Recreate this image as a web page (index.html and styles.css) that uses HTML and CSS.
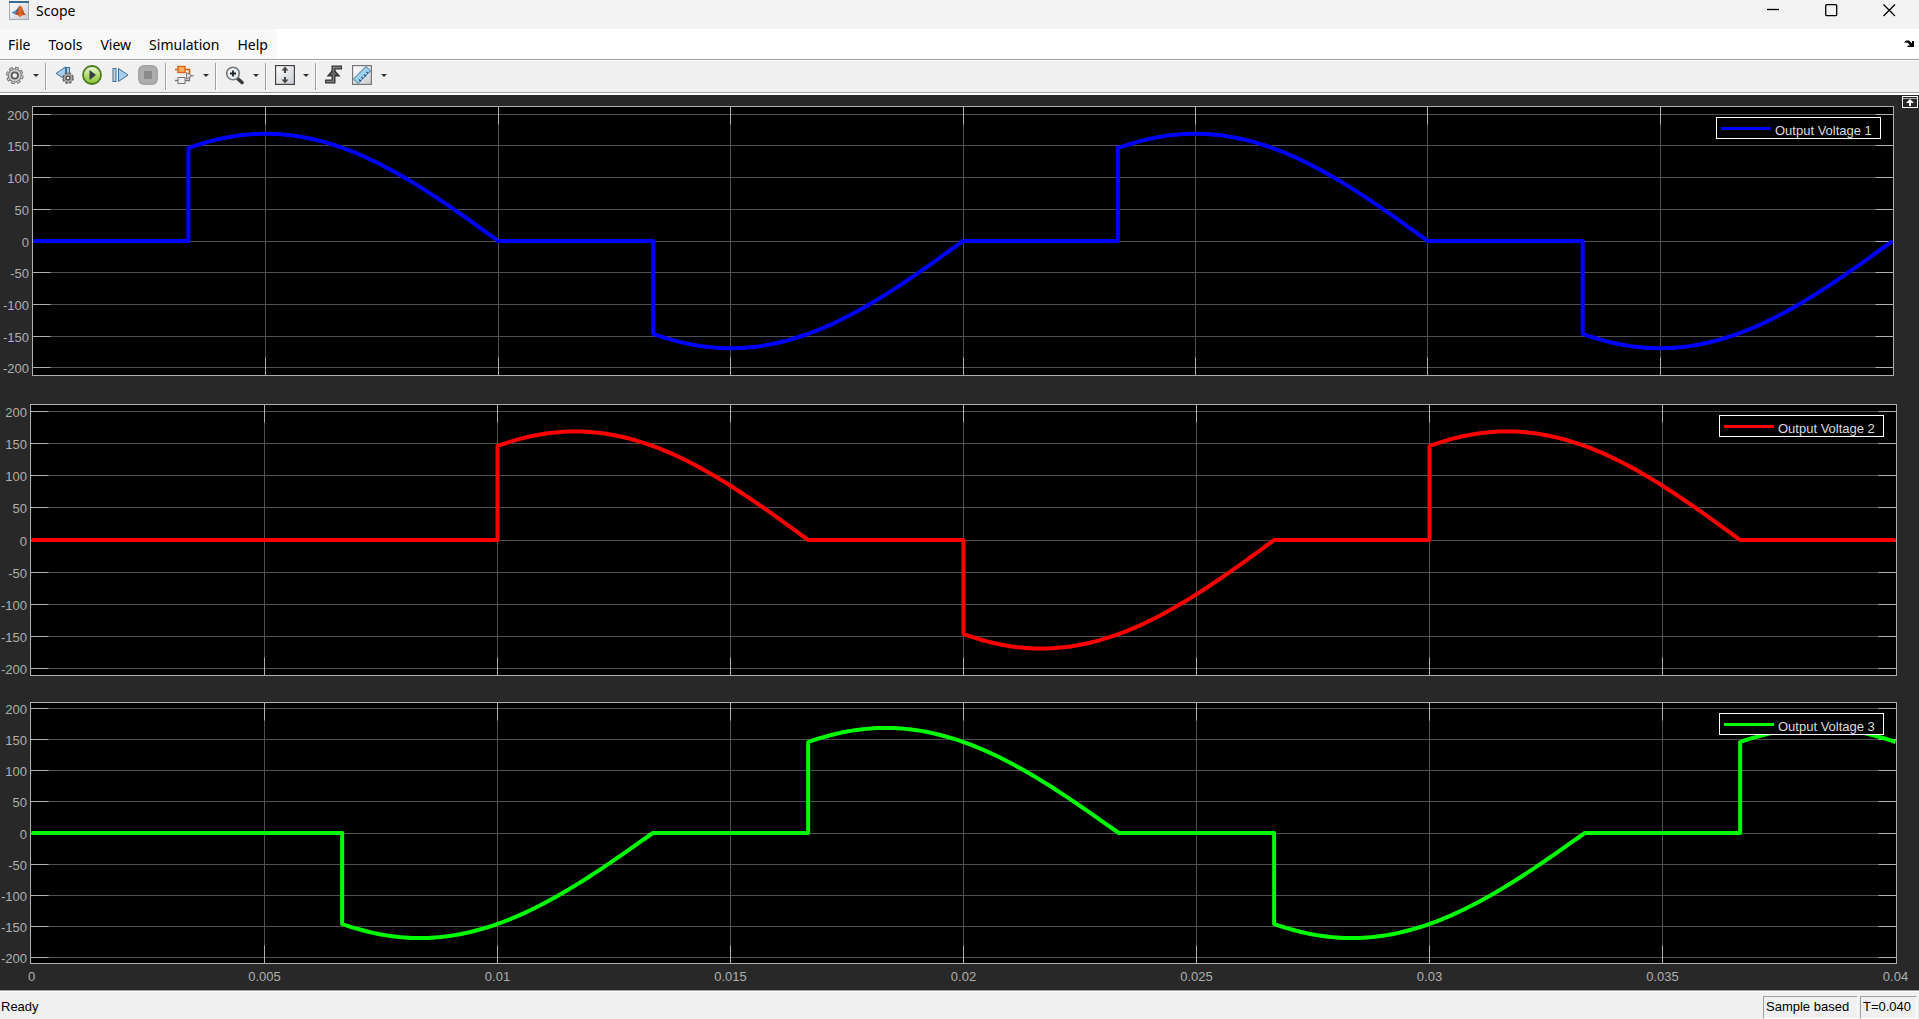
FILE: index.html
```html
<!DOCTYPE html>
<html lang="en">
<head>
<meta charset="utf-8">
<title>Scope</title>
<link rel="stylesheet" href="styles.css">
</head>
<body>
<div class="window">
  <header class="titlebar">
    <svg class="app-icon" width="20" height="20" viewBox="0 0 20 20" aria-hidden="true">
      <defs>
        <linearGradient id="peak" x1="0" y1="0" x2="1" y2="0">
          <stop offset="0" stop-color="#7a1c10"/><stop offset=".45" stop-color="#e8702a"/><stop offset="1" stop-color="#b32c14"/>
        </linearGradient>
        <linearGradient id="paper" x1="0" y1="0" x2="1" y2="1">
          <stop offset="0" stop-color="#ffffff"/><stop offset="1" stop-color="#c8cdd3"/>
        </linearGradient>
      </defs>
      <rect x=".5" y=".5" width="19" height="18" fill="url(#paper)" stroke="#a3a9b0"/>
      <rect x="0" y="0" width="20" height="2" fill="#3f6a94"/>
      <path d="M2.5 11.5 L6.5 9.5 L8.5 12 L6 13.5 Z" fill="#4d8fc4"/>
      <path d="M6.5 9.5 C8.5 9 9.5 5 11 4.5 L8.5 12 Z" fill="#2f5f96"/>
      <path d="M6 13.5 C8.500 12 9.500 5 11.500 4.500 C13.500 5 14.500 12 17 14.500 C14.500 13.500 13 14 11 16.500 C10 14.500 8.500 13 6 13.500 Z" fill="url(#peak)"/>
    </svg>
    <h1 class="title">Scope</h1>
    <div class="window-controls">
      <button class="window-button" type="button" aria-label="Minimize"><svg width="13" height="13" viewBox="0 0 13 13"><path d="M0 5.500H12" /></svg></button>
      <button class="window-button" type="button" aria-label="Maximize"><svg width="13" height="13" viewBox="0 0 13 13"><rect x=".7" y=".7" width="11" height="11" rx="1"/></svg></button>
      <button class="window-button" type="button" aria-label="Close"><svg width="13" height="13" viewBox="0 0 13 13"><path d="M.5 .5 L12 12 M12 .5 L.5 12"/></svg></button>
    </div>
  </header>

  <div class="menubar">
    <nav class="menus" aria-label="Menu">
      <button class="menu" type="button">File</button>
      <button class="menu" type="button">Tools</button>
      <button class="menu" type="button">View</button>
      <button class="menu" type="button">Simulation</button>
      <button class="menu" type="button">Help</button>
    </nav>
    <button class="dock" type="button" aria-label="Dock window">
      <svg width="11" height="8" viewBox="0 0 11 8"><path d="M0 2.500 L2 .5 H5 L8 3.500 V1 H10 V7 H3.500 V5.500 H6 L4 2.800 Z" fill="#000"/></svg>
    </button>
  </div>

  <div class="toolbar" role="toolbar" aria-label="Scope tools">
    <div class="group group-first">
      <button class="tool" type="button" aria-label="Configuration properties">
        <svg width="20" height="20" viewBox="0 0 20 20">
          <circle cx="10.800" cy="10.500" r="7.400" fill="none" stroke="#6a6a6a" stroke-width="2.800" stroke-dasharray="3.600 2.210"/>
          <circle cx="10.800" cy="10.500" r="6.600" fill="#cdcdcd" stroke="#7a7a7a" stroke-width="1.200"/>
          <circle cx="10.800" cy="10.500" r="7.300" fill="none" stroke="#c6c6c6" stroke-width="1.400" stroke-dasharray="2.200 3.530" stroke-dashoffset="-.7"/>
          <circle cx="10.800" cy="10.500" r="3.200" fill="#f2f2f2" stroke="#5a5a5a" stroke-width="1.800"/>
        </svg>
      </button>
      <button class="drop" type="button" aria-label="More configuration"><svg width="6" height="3" viewBox="0 0 6 3"><path d="M0 0H6L3 3Z"/></svg></button>
    </div>
    <div class="group group-run">
      <button class="tool" type="button" aria-label="Step back">
        <svg width="20" height="20" viewBox="0 0 20 20">
          <path d="M2 8.500 L11.500 2 V14.500 Z" fill="#a9cde6" stroke="#3d6f99"/>
          <rect x="12.500" y="2.500" width="3" height="8" fill="#a9cde6" stroke="#3d6f99"/>
          <circle cx="14" cy="13" r="4.800" fill="none" stroke="#666" stroke-width="2.200" stroke-dasharray="2.500 1.270"/>
          <circle cx="14" cy="13" r="4.200" fill="#ccc" stroke="#777"/>
          <circle cx="14" cy="13" r="2" fill="#eee" stroke="#4c4c4c" stroke-width="1.500"/>
        </svg>
      </button>
      <button class="tool" type="button" aria-label="Run">
        <svg width="20" height="20" viewBox="0 0 20 20">
          <defs><linearGradient id="run" x1="0" y1="0" x2="0" y2="1"><stop offset="0" stop-color="#f2f9dd"/><stop offset=".5" stop-color="#b6dc78"/><stop offset="1" stop-color="#84c52f"/></linearGradient></defs>
          <circle cx="10" cy="10" r="9" fill="url(#run)" stroke="#4a7a1c" stroke-width="1.800"/>
          <path d="M7.500 5 L14 10 L7.500 15 Z" fill="#363d44"/>
        </svg>
      </button>
      <button class="tool" type="button" aria-label="Step forward">
        <svg width="20" height="20" viewBox="0 0 20 20">
          <rect x="3" y="3.500" width="3" height="13" fill="#b5d6ec" stroke="#3f6d96"/>
          <path d="M8.500 3.500 L18 10 L8.500 16.500 Z" fill="#a6cdea" stroke="#3f6d96"/>
        </svg>
      </button>
      <button class="tool" type="button" aria-label="Stop">
        <svg width="20" height="20" viewBox="0 0 20 20">
          <rect x="0" y="0" width="20" height="20" rx="6" fill="#a3a3a3"/>
          <rect x="1.500" y="1.500" width="17" height="17" rx="5" fill="#adadad"/>
          <rect x="6" y="6" width="8" height="8" fill="#8a8a8a"/>
        </svg>
      </button>
    </div>
    <div class="group">
      <button class="tool" type="button" aria-label="Highlight signal block">
        <svg width="20" height="20" viewBox="0 0 20 20">
          <path d="M1 4.500H15.500V9" fill="none" stroke="#c65a1a" stroke-width="1.600"/>
          <rect x="4" y="1.500" width="7" height="6" fill="#f9b163" stroke="#d9641c" stroke-width="1.400"/>
          <path d="M1 15.500H15.500V12" fill="none" stroke="#777" stroke-width="1.400"/>
          <rect x="4" y="12.500" width="7" height="6" fill="#eee" stroke="#777"/>
          <path d="M12.500 7.500 V14 L18 10.800 Z" fill="#ddd" stroke="#777"/>
          <path d="M18 10.800H20" stroke="#777"/>
        </svg>
      </button>
      <button class="drop" type="button" aria-label="More highlight options"><svg width="6" height="3" viewBox="0 0 6 3"><path d="M0 0H6L3 3Z"/></svg></button>
    </div>
    <div class="group">
      <button class="tool" type="button" aria-label="Zoom">
        <svg width="20" height="20" viewBox="0 0 20 20">
          <path d="M13 13 L18 17.500" stroke="#3b3b3b" stroke-width="3.600" stroke-linecap="round"/>
          <circle cx="9" cy="8.500" r="6.300" fill="#eaf1f6" stroke="#777" stroke-width="1.600"/>
          <path d="M9 5.500V11.500M6 8.500H12" stroke="#222" stroke-width="1.800"/>
        </svg>
      </button>
      <button class="drop" type="button" aria-label="More zoom options"><svg width="6" height="3" viewBox="0 0 6 3"><path d="M0 0H6L3 3Z"/></svg></button>
    </div>
    <div class="group group-wide">
      <button class="tool" type="button" aria-label="Scale axes limits">
        <svg width="20" height="20" viewBox="0 0 20 20">
          <rect x=".6" y=".6" width="18.800" height="18.800" fill="url(#paper)" stroke="#444" stroke-width="1.200"/>
          <path d="M10 1.500 L13.500 5.500 H11 V8 H9 V5.500 H6.500 Z M10 18.500 L13.500 14.500 H11 V12 H9 V14.500 H6.500 Z" fill="#444"/>
        </svg>
      </button>
      <button class="drop" type="button" aria-label="More scaling options"><svg width="6" height="3" viewBox="0 0 6 3"><path d="M0 0H6L3 3Z"/></svg></button>
    </div>
    <div class="group group-last">
      <button class="tool" type="button" aria-label="Triggers">
        <svg width="20" height="20" viewBox="0 0 20 20">
          <path d="M1 16.500H9.500V2.500H18" fill="none" stroke="#333" stroke-width="4"/>
          <path d="M9.500 3.500 L16.500 11.500 H2.500 Z" fill="#333"/>
          <path d="M2 16.500H9.500V2.500H17" fill="none" stroke="#858585" stroke-width="1.400"/>
          <path d="M9.500 6 L13 10 H6 Z" fill="#666"/>
        </svg>
      </button>
      <div class="split">
        <button class="tool" type="button" aria-label="Cursor measurements">
          <svg width="20" height="20" viewBox="0 0 20 20">
            <rect x=".6" y=".6" width="18.800" height="18.800" fill="url(#paper)" stroke="#777" stroke-width="1.200"/>
            <path d="M1.500 14 L14 1.500 L18.500 6 L6 18.500 Z" fill="#9fd0ee" stroke="#3d739c"/>
            <path d="M7 14.500l2 2M9.500 12l1.500 1.500M12 9.500l2 2M14.500 7l1.500 1.500" stroke="#27567c" stroke-width="1.200"/>
          </svg>
        </button>
        <button class="drop" type="button" aria-label="More measurements"><svg width="6" height="3" viewBox="0 0 6 3"><path d="M0 0H6L3 3Z"/></svg></button>
      </div>
    </div>
  </div>

  <main class="scope">
    <section class="panel panel-1" data-limit="212" data-delay="0" data-color="#0000ff">
      <svg class="plot" role="img" aria-label="Output Voltage 1 against time"></svg>
      <div class="legend"><span class="swatch swatch-1"></span>Output Voltage 1</div>
    </section>
    <section class="panel panel-2" data-limit="211" data-delay="1" data-color="#ff0000">
      <svg class="plot" role="img" aria-label="Output Voltage 2 against time"></svg>
      <div class="legend"><span class="swatch swatch-2"></span>Output Voltage 2</div>
    </section>
    <section class="panel panel-3" data-limit="210" data-delay="2" data-color="#00ff00" data-axis="time">
      <svg class="plot" role="img" aria-label="Output Voltage 3 against time"></svg>
      <div class="legend"><span class="swatch swatch-3"></span>Output Voltage 3</div>
    </section>
    <button class="maximize-axes" type="button" aria-label="Maximize axes">
      <svg width="16" height="12" viewBox="0 0 16 12"><rect x=".5" y=".5" width="15" height="11" fill="#282828" stroke="#fff"/><path d="M1 2.500H15" stroke="#aaa"/><path d="M8 3 L12 7 H9 V10 H7 V7 H4 Z" fill="#fff"/></svg>
    </button>
  </main>

  <footer class="statusbar">
    <span class="status-text">Ready</span>
    <span class="status-box status-mode">Sample based</span>
    <span class="status-box status-time">T=0.040</span>
  </footer>
</div>
<script src="scope.js"></script>
</body>
</html>
```
FILE: styles.css
```css
* {
  box-sizing: border-box;
}

body {
  margin: 0;
  color: #000;
  font-family: "Liberation Sans", Arial, sans-serif;
  font-size: 13px;
}

button {
  margin: 0;
  padding: 0;
  border: 0;
  background: none;
  color: inherit;
  font: inherit;
}

svg {
  display: block;
}

.window {
  display: flex;
  flex-direction: column;
  height: 100vh;
  background: #f0f0f0;
}

/* Title bar */
.titlebar {
  display: flex;
  flex: none;
  height: 29px;
  padding: 0 1px 0 9px;
  background: #f3f3f3;
}

.app-icon {
  margin-top: 1px;
}

.title {
  margin: 0 0 0 7px;
  font: 14px/21px "Noto Sans", sans-serif;
}

.window-controls {
  display: flex;
  margin-left: auto;
}

.window-button {
  display: flex;
  justify-content: center;
  width: 58px;
  padding-top: 4px;
}

.window-button svg {
  fill: none;
  stroke: #000;
  stroke-width: 1.3;
}

/* Menu bar */
.menubar {
  display: flex;
  flex: none;
  justify-content: space-between;
  height: 30px;
  background: #fff;
}

.menus {
  display: flex;
  background: #f9f9f9;
}

.menu {
  padding: 1px 9px 0;
  font: 14px/30px "Noto Sans", sans-serif;
}

.menu:first-child {
  padding-left: 8px;
}

.dock {
  padding: 0 4px 0 0;
}

/* Toolbar */
.toolbar {
  display: flex;
  flex: none;
  height: 36px;
  border-top: 1px solid #a0a0a0;
  border-bottom: 2px solid #fff;
  box-shadow: inset 0 1px #fff, inset 0 -1px #a0a0a0;
}

.group {
  display: flex;
  align-items: center;
  gap: 6px;
  margin: 3px 1px 3px 0;
  padding: 0 3px 3px 7px;
  border-right: 1px solid #a0a0a0;
  box-shadow: 1px 0 #fff;
}

.group-first {
  padding-left: 4px;
}

.group-run {
  gap: 8px;
  padding-right: 7px;
}

.group-wide {
  gap: 5px;
  padding-left: 8px;
}

.group-last {
  gap: 8px;
  border: 0;
  box-shadow: none;
}

.split {
  display: flex;
  align-items: center;
  gap: 6px;
}

.tool {
  width: 20px;
  height: 20px;
}

.drop {
  display: flex;
  justify-content: center;
  align-items: center;
  width: 12px;
  height: 20px;
}

.drop path {
  fill: #333;
}

/* Plots */
.scope {
  position: relative;
  display: flex;
  flex: 1;
  flex-direction: column;
  gap: 26px;
  min-height: 0;
  padding: 11px 22px 26px 30px;
  background: #282828;
}

.panel {
  position: relative;
  min-height: 0;
}

.panel-1 {
  flex: 270 1 0;
  margin: 0 3px 2px 2px;
}

.panel-2 {
  flex: 272 1 0;
}

.panel-3 {
  flex: 262 1 0;
}

.plot {
  position: absolute;
  inset: 0;
  width: 100%;
  height: 100%;
  overflow: visible;
}

.plot-area {
  fill: #000;
}

.frame {
  fill: none;
  stroke: #afafaf;
}

.grid {
  fill: none;
  stroke: #505050;
}

.ticks {
  fill: none;
  stroke: #afafaf;
}

.signal {
  fill: none;
  stroke-width: 4;
  stroke-linejoin: round;
}

.label {
  fill: #afafaf;
  font-size: 13px;
}

.label-value {
  text-anchor: end;
}

.label-time {
  text-anchor: middle;
}

.legend {
  position: absolute;
  top: 11px;
  right: 13px;
  display: flex;
  align-items: center;
  gap: 4px;
  width: 165px;
  height: 22px;
  padding: 4px 0 0 4px;
  border: 1px solid #fff;
  background: #000;
  color: #dcdcdc;
  white-space: nowrap;
}

.swatch {
  width: 50px;
  height: 3px;
  margin-bottom: 4px;
}

.swatch-1 {
  background: #00f;
}

.swatch-2 {
  background: #f00;
}

.swatch-3 {
  background: #0f0;
}

.maximize-axes {
  position: absolute;
  top: 1px;
  right: 1px;
}

/* Status bar */
.statusbar {
  display: flex;
  flex: none;
  gap: 2px;
  height: 29px;
  padding: 5px 2px 0 1px;
  border-top: 1px solid #a0a0a0;
  box-shadow: inset 0 1px #fff;
  line-height: 20px;
}

.status-text {
  flex: 1;
  padding-top: 1px;
}

.status-box {
  height: 23px;
  padding-left: 2px;
  border: 1px solid #fff;
  border-top-color: #a0a0a0;
  border-left-color: #a0a0a0;
}

.status-mode {
  width: 95px;
}

.status-time {
  width: 57px;
}
```
FILE: scope.js
```js
const SPAN = 0.04;
const PEAK = 169;
const PERIOD = 0.02;
const FIRING = PERIOD / 6;
const VALUES = [-200, -150, -100, -50, 0, 50, 100, 150, 200];
const TIMES = [0, 0.005, 0.01, 0.015, 0.02, 0.025, 0.03, 0.035, 0.04];
const TICK = 18;

// Points of a half-wave controlled sine: zero until the firing angle, then the sine.
function signalPoints(delay) {
  const points = [[0, 0]];
  const shift = delay * PERIOD / 3;
  for (let half = -2; half < 4; half++) {
    const start = half * PERIOD / 2 + shift + FIRING;
    const end = start - FIRING + PERIOD / 2;
    if (start < 0.001 || start >= SPAN - 1e-9) continue;
    points.push([start, 0]);
    for (let i = 0; i <= 80; i++) {
      const t = start + (end - start) * i / 80;
      if (t > SPAN + 1e-9) return points;
      points.push([t, PEAK * Math.sin(2 * Math.PI * (t - shift) / PERIOD)]);
    }
  }
  points.push([SPAN, 0]);
  return points;
}

function draw(panel) {
  const svg = panel.querySelector(".plot");
  const w = Math.round(panel.clientWidth) - 1;
  const h = Math.round(panel.clientHeight) - 1;
  const limit = Number(panel.dataset.limit);
  const x = t => t / SPAN * (w - 2) + 1.5;
  const y = v => (limit - v) / (2 * limit) * h + 0.5;
  const snap = n => Math.round(n - 0.5) + 0.5;
  let grid = "", ticks = "", labels = "";

  for (const v of VALUES) {
    const py = snap(y(v));
    grid += `M0.5 ${py}H${w + 0.5}`;
    ticks += `M0.5 ${py}h${TICK}M${w + 0.5} ${py}h${-TICK}`;
    labels += `<text class="label label-value" x="-3" y="${py + 5.5}">${v}</text>`;
  }
  for (const t of TIMES) {
    const px = snap(x(t));
    if (t > 0 && t < SPAN) {
      grid += `M${px} 0.5V${h + 0.5}`;
      ticks += `M${px} 0.5v${TICK}M${px} ${h + 0.5}v${-TICK}`;
    }
    if (panel.dataset.axis) {
      labels += `<text class="label label-time" x="${px}" y="${h + 18}">${t}</text>`;
    }
  }
  const line = signalPoints(Number(panel.dataset.delay))
    .map(([t, v]) => `${x(t).toFixed(2)},${y(v).toFixed(2)}`).join(" ");

  svg.innerHTML =
    `<rect class="plot-area" width="${w + 1}" height="${h + 1}"/>` +
    `<path class="grid" d="${grid}"/><path class="ticks" d="${ticks}"/>` +
    `<rect class="frame" x="0.5" y="0.5" width="${w}" height="${h}"/>` +
    `<polyline class="signal" stroke="${panel.dataset.color}" points="${line}"/>` + labels;
}

const panels = document.querySelectorAll(".panel");
const drawAll = () => panels.forEach(draw);
drawAll();
window.addEventListener("resize", drawAll);
```
